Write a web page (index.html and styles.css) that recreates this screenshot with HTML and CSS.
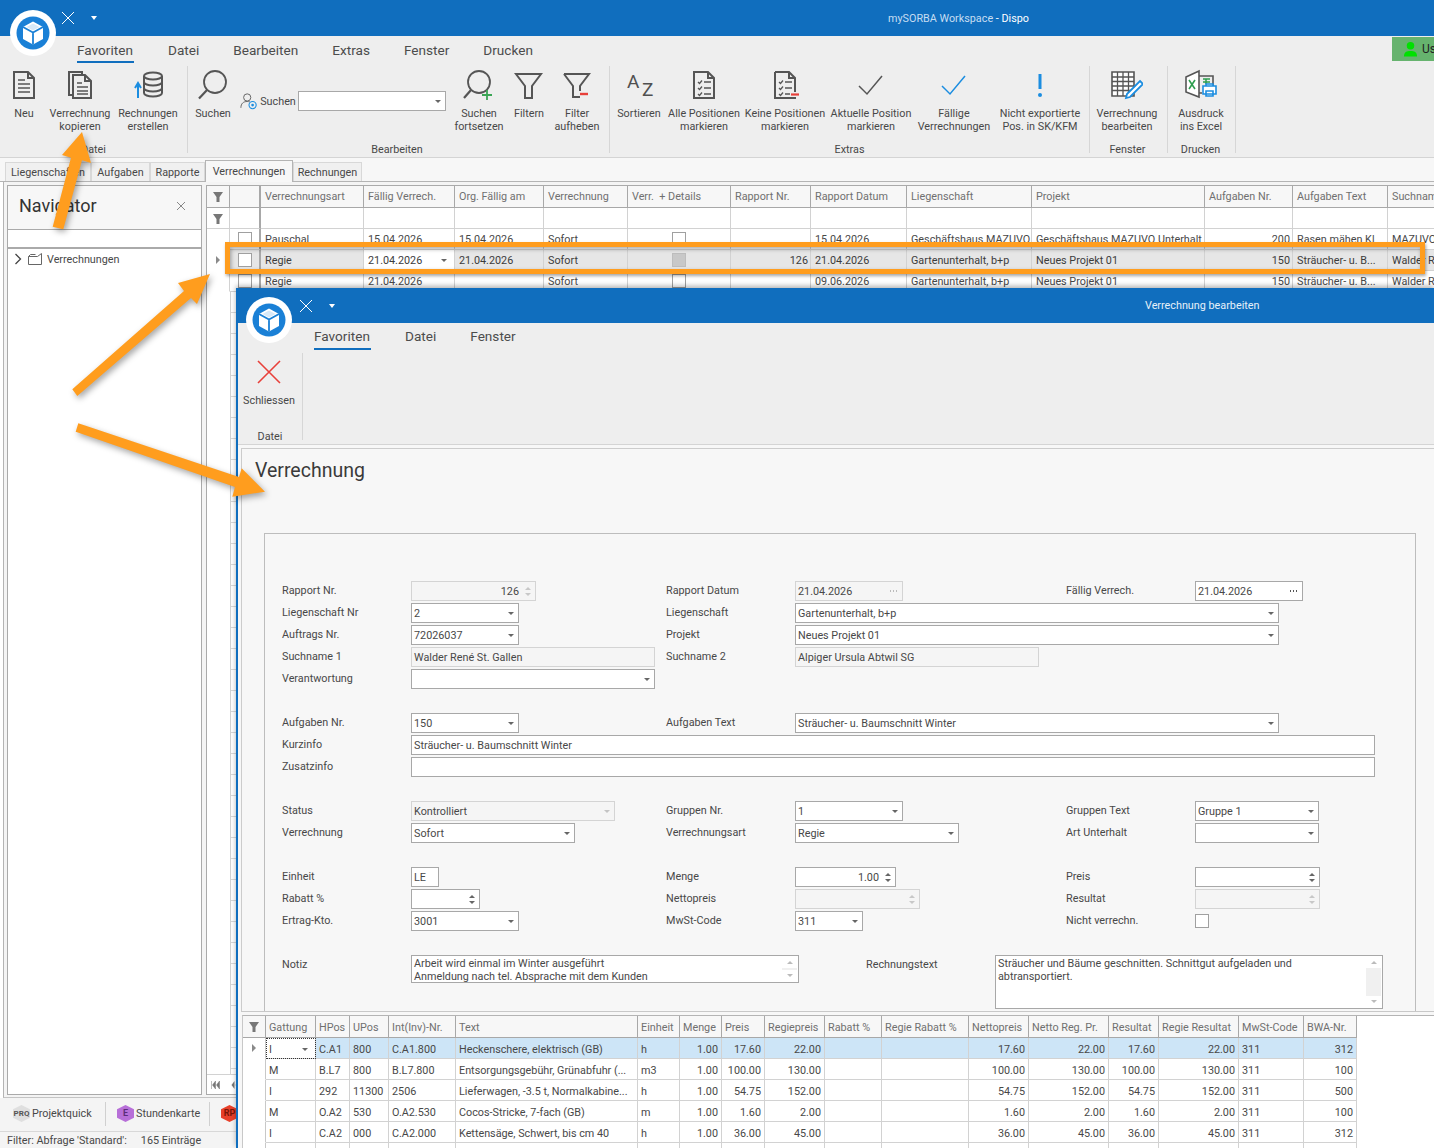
FILE: index.html
```html
<!DOCTYPE html>
<html lang="de">
<head>
  <meta charset="UTF-8" />
  <title>mySORBA Workspace - Dispo</title>
  <link rel="stylesheet" href="styles.css">
</head>
<body>
  <svg class="defs" width="0" height="0">
    <defs>
      <symbol id="i-logo" viewBox="0 0 46 46">
        <circle cx="23" cy="23" r="23" fill="#fff"/>
        <circle cx="23" cy="23" r="16.5" fill="#1a80d6"/>
        <path d="M23 11.5l10 5.5v12l-10 5.5-10-5.5V17z" fill="#fff"/>
        <path d="M13 17l10 5.5L33 17M23 22.5v12" fill="none" stroke="#1a80d6" stroke-width="1.8"/>
        <path d="M23 13.5l6.5 3.5-6.500 3.500-6.500-3.500z" fill="#d7e9f8"/>
      </symbol>
      <symbol id="i-page" viewBox="0 0 32 32">
        <path d="M6 3h14l6 6v20H6zM20 3v6h6" fill="none" stroke="#555" stroke-width="2"/>
        <path d="M10 11h7M10 15h12M10 19h12M10 23h12" stroke="#555" stroke-width="1.5"/>
      </symbol>
      <symbol id="i-copy" viewBox="0 0 32 32">
        <path d="M8 26H5V3h13v3" fill="none" stroke="#555" stroke-width="2"/>
        <path d="M9 6h12l6 6v17H9zM21 6v6h6" fill="none" stroke="#555" stroke-width="2"/>
        <path d="M13 14h5M13 18h11M13 22h11M13 25h11" stroke="#555" stroke-width="1.4"/>
      </symbol>
      <symbol id="i-db" viewBox="0 0 32 32">
        <path d="M6 29V15M3 19l3-5 3 5" fill="none" stroke="#1b8de0" stroke-width="2"/>
        <ellipse cx="21" cy="7" rx="9" ry="3.500" fill="none" stroke="#555" stroke-width="2"/>
        <path d="M12 7v17c0 2 4 3.500 9 3.500s9-1.500 9-3.500V7M12 13c0 2 4 3.500 9 3.500s9-1.500 9-3.500M12 19c0 2 4 3.500 9 3.500s9-1.500 9-3.500" fill="none" stroke="#555" stroke-width="2"/>
      </symbol>
      <symbol id="i-search" viewBox="0 0 32 32">
        <circle cx="18" cy="13" r="11" fill="none" stroke="#555" stroke-width="1.800"/>
        <path d="M10 21L2 29.500" stroke="#555" stroke-width="2.200"/>
      </symbol>
      <symbol id="i-search-plus" viewBox="0 0 32 32">
        <circle cx="16" cy="13" r="11" fill="none" stroke="#555" stroke-width="1.800"/>
        <path d="M8 21L1 29" stroke="#555" stroke-width="2.200"/>
        <path d="M24 21v10M19 26h10" stroke="#3aa655" stroke-width="1.800"/>
      </symbol>
      <symbol id="i-filter" viewBox="0 0 32 32">
        <path d="M3 5h25L19 17v12h-7V17z" fill="none" stroke="#555" stroke-width="2"/>
      </symbol>
      <symbol id="i-filter-minus" viewBox="0 0 32 32">
        <path d="M3 5h25L19 17v5M19 28h-7V17L3 5" fill="none" stroke="#555" stroke-width="2"/>
        <path d="M19 25h8" stroke="#e8403a" stroke-width="2.400"/>
      </symbol>
      <symbol id="i-list" viewBox="0 0 32 32">
        <path d="M6 3h14l6 6v20H6zM20 3v6h6" fill="none" stroke="#555" stroke-width="2"/>
        <path d="M10 13l1.500 1.500 2.500-3M10 19l1.500 1.500 2.500-3M10 25l1.500 1.500 2.500-3" fill="none" stroke="#555" stroke-width="1.300"/>
        <path d="M16 13h7M16 19h7M16 25h7" stroke="#555" stroke-width="1.500"/>
      </symbol>
      <symbol id="i-list-minus" viewBox="0 0 32 32">
        <path d="M6 3h14l6 6v14M26 28v1H6V3M20 3v6h6" fill="none" stroke="#555" stroke-width="2"/>
        <path d="M10 13l1.500 1.500 2.500-3M10 19l1.500 1.500 2.500-3M10 25l1.500 1.500 2.500-3" fill="none" stroke="#555" stroke-width="1.300"/>
        <path d="M16 13h7M16 19h7M16 25h5" stroke="#555" stroke-width="1.500"/>
        <path d="M22 25.500h8" stroke="#e8403a" stroke-width="2.200"/>
      </symbol>
      <symbol id="i-grid" viewBox="0 0 32 32">
        <path d="M1 3h22v24H1z" fill="#fff" stroke="#555" stroke-width="1.600"/>
        <path d="M1 8h22M1 12.500h22M1 17h22M1 21.500h22M6.500 3v24M12 3v24M17.500 3v24" stroke="#555" stroke-width="1.300"/>
        <path d="M29 12l3 3-13 13-4 1 1-4z" fill="#fff" stroke="#1b8de0" stroke-width="1.800"/>
      </symbol>
      <symbol id="i-excel" viewBox="0 0 32 32">
        <path d="M1 8l13-6v26L1 23z" fill="#fff" stroke="#555" stroke-width="1.600"/>
        <path d="M14 7h14v10M14 24h3" fill="none" stroke="#555" stroke-width="1.600"/>
        <path d="M4 11l6 9M10 11l-6 9" stroke="#2e9e4f" stroke-width="1.600"/>
        <path d="M18 10h7M21 10v5M18 13h7" fill="none" stroke="#2e9e4f" stroke-width="1.500"/>
        <path d="M21 17v-2h7v2M18 17h13v8H18zM21 22h7v5h-7z" fill="#fff" stroke="#1b8de0" stroke-width="1.600"/>
      </symbol>
    </defs>
  </svg>

  <div class="app">
    <div class="titlebar">
      <svg class="tb-x" viewBox="0 0 14 14"><path d="M1 1l12 12M13 1L1 13" stroke="#fff" stroke-width="1"/></svg>
      <span class="tb-caret"></span>
      <div class="win-title">mySORBA Workspace <b>- Dispo</b></div>
    </div>
    <svg class="logo main-logo"><use href="#i-logo"/></svg>

    <div class="ribbon">
      <div class="tabs main-tabs">
        <span class="tab on">Favoriten</span>
        <span class="tab">Datei</span>
        <span class="tab">Bearbeiten</span>
        <span class="tab">Extras</span>
        <span class="tab">Fenster</span>
        <span class="tab">Drucken</span>
        <div class="user">
          <svg viewBox="0 0 16 16"><circle cx="8" cy="4.500" r="4" fill="#00e000"/><path d="M1 16c0-5 3-6 7-6s7 1 7 6z" fill="#00e000"/></svg>
          <span>Us</span>
        </div>
      </div>
      <div class="groups">
        <div class="group g1">
          <div class="items">
            <div class="item w48"><svg><use href="#i-page"/></svg><span>Neu</span></div>
            <div class="item w64"><svg><use href="#i-copy"/></svg><span>Verrechnung<br>kopieren</span></div>
            <div class="item w72"><svg><use href="#i-db"/></svg><span>Rechnungen<br>erstellen</span></div>
          </div>
          <div class="group-name">Datei</div>
        </div>
        <div class="group g2">
          <div class="items">
            <div class="item w42"><svg><use href="#i-search"/></svg><span>Suchen</span></div>
            <div class="search-box">
              <svg viewBox="0 0 20 20"><circle cx="8" cy="5.500" r="4" fill="none" stroke="#666" stroke-width="1.100"/><path d="M1 17c0-5 3-7 7-7 1 0 2 .2 3 .5" fill="none" stroke="#666" stroke-width="1.100"/><circle cx="14" cy="14" r="4" fill="none" stroke="#1b8de0" stroke-width="1.200"/><circle cx="14" cy="14" r="1.500" fill="#1b8de0"/></svg>
              <span>Suchen</span>
              <div class="field combo w148"><span></span><i class="caret"></i></div>
            </div>
            <div class="item w54"><svg><use href="#i-search-plus"/></svg><span>Suchen<br>fortsetzen</span></div>
            <div class="item w46"><svg><use href="#i-filter"/></svg><span>Filtern</span></div>
            <div class="item w50"><svg><use href="#i-filter-minus"/></svg><span>Filter<br>aufheben</span></div>
          </div>
          <div class="group-name">Bearbeiten</div>
        </div>
        <div class="group g3">
          <div class="items">
            <div class="item w50">
              <svg viewBox="0 0 32 32"><text x="4" y="19" class="az">A</text><text x="19" y="27" class="az">Z</text></svg>
              <span>Sortieren</span>
            </div>
            <div class="item w80"><svg><use href="#i-list"/></svg><span>Alle Positionen<br>markieren</span></div>
            <div class="item w82"><svg><use href="#i-list-minus"/></svg><span>Keine Positionen<br>markieren</span></div>
            <div class="item w90"><svg viewBox="0 0 32 32"><path d="M4 17l8 8L27 7" fill="none" stroke="#555" stroke-width="1.500"/></svg><span>Aktuelle Position<br>markieren</span></div>
            <div class="item w76"><svg viewBox="0 0 32 32"><path d="M4 17l8 8L27 7" fill="none" stroke="#1b8de0" stroke-width="1.500"/></svg><span>Fällige<br>Verrechnungen</span></div>
            <div class="item w96"><svg viewBox="0 0 32 32"><path d="M16 5v15" stroke="#1b8de0" stroke-width="3"/><circle cx="16" cy="26" r="2" fill="#1b8de0"/></svg><span>Nicht exportierte<br>Pos. in SK/KFM</span></div>
          </div>
          <div class="group-name">Extras</div>
        </div>
        <div class="group g4">
          <div class="items">
            <div class="item w74"><svg><use href="#i-grid"/></svg><span>Verrechnung<br>bearbeiten</span></div>
          </div>
          <div class="group-name">Fenster</div>
        </div>
        <div class="group g5">
          <div class="items">
            <div class="item w66"><svg><use href="#i-excel"/></svg><span>Ausdruck<br>ins Excel</span></div>
          </div>
          <div class="group-name">Drucken</div>
        </div>
      </div>
    </div>

    <div class="doc-tabs">
      <span class="doc-tab t85">Liegenschaften</span>
      <span class="doc-tab t59">Aufgaben</span>
      <span class="doc-tab t55">Rapporte</span>
      <span class="doc-tab t88 active">Verrechnungen</span>
      <span class="doc-tab t69">Rechnungen</span>
    </div>

    <div class="workspace">
      <div class="navigator">
        <div class="nav-head">
          <span>Navigator</span>
          <svg viewBox="0 0 10 10"><path d="M1 1l8 8M9 1L1 9" stroke="#888" stroke-width="1"/></svg>
        </div>
        <div class="nav-search"></div>
        <div class="nav-tree">
          <svg class="chev" viewBox="0 0 8 12"><path d="M1.500 1l5 5-5 5" fill="none" stroke="#444" stroke-width="1.300"/></svg>
          <svg class="folder" viewBox="0 0 14 12"><path d="M.5 3.500h9l4-3v11H.5zM.5 3.500l2-2h5" fill="none" stroke="#666" stroke-width="1"/></svg>
          <span>Verrechnungen</span>
        </div>
      </div>

      <div class="grid-panel">
        <table class="data top-grid">
          <colgroup>
            <col class="ct-0"><col class="ct-1"><col class="ct-2"><col class="ct-3"><col class="ct-4"><col class="ct-5"><col class="ct-6"><col class="ct-7"><col class="ct-8"><col class="ct-9"><col class="ct-10"><col class="ct-11"><col class="ct-12"><col class="ct-13">
          </colgroup>
          <tr class="head">
            <th class="fcell"><svg class="funnel" viewBox="0 0 10 10"><path d="M0 0h10L6.500 5v5h-3V5z" fill="#777"/></svg></th>
            <th class="thick"></th>
            <th>Verrechnungsart</th><th>Fällig Verrech.</th><th>Org. Fällig am</th><th>Verrechnung</th><th>Verr. &nbsp;+ Details</th><th>Rapport Nr.</th><th>Rapport Datum</th><th>Liegenschaft</th><th>Projekt</th><th>Aufgaben Nr.</th><th>Aufgaben Text</th><th>Suchname</th>
          </tr>
          <tr class="filter-row">
            <td class="fcell"><svg class="funnel" viewBox="0 0 10 10"><path d="M0 0h10L6.500 5v5h-3V5z" fill="#777"/></svg></td>
            <td class="thick"></td><td></td><td></td><td></td><td></td><td></td><td></td><td></td><td></td><td></td><td></td><td></td><td></td>
          </tr>
          <tr>
            <td class="indicator"></td><td class="thick chk"><i class="box"></i></td>
            <td>Pauschal</td><td>15.04.2026</td><td>15.04.2026</td><td>Sofort</td><td class="chk"><i class="box"></i></td><td></td><td>15.04.2026</td><td>Geschäftshaus MAZUVO</td><td>Geschäftshaus MAZUVO Unterhalt</td><td class="num">200</td><td>Rasen mähen Kl</td><td>MAZUVO</td>
          </tr>
          <tr class="current">
            <td class="indicator"><i class="pointer"></i></td><td class="thick chk"><i class="box"></i></td>
            <td>Regie</td><td class="focus"><div class="cell-flex">21.04.2026<i class="caret"></i></div></td><td>21.04.2026</td><td>Sofort</td><td class="chk"><i class="box grey"></i></td><td class="num">126</td><td>21.04.2026</td><td>Gartenunterhalt, b+p</td><td>Neues Projekt 01</td><td class="num">150</td><td>Sträucher- u. B...</td><td>Walder René</td>
          </tr>
          <tr>
            <td class="indicator"></td><td class="thick chk"><i class="box"></i></td>
            <td>Regie</td><td>21.04.2026</td><td></td><td>Sofort</td><td class="chk"><i class="box"></i></td><td></td><td>09.06.2026</td><td>Gartenunterhalt, b+p</td><td>Neues Projekt 01</td><td class="num">150</td><td>Sträucher- u. B...</td><td>Walder René</td>
          </tr>
        </table>
        <div class="grid-fill"></div>
        <div class="pager">
          <svg viewBox="0 0 10 8"><path d="M1 0v8M5 0L2 4l3 4zM9 0L6 4l3 4z" fill="#777" stroke="#777" stroke-width=".5"/></svg>
          <svg viewBox="0 0 10 8"><path d="M5 0L2 4l3 4zM9 0L6 4l3 4z" fill="#777"/></svg>
        </div>
      </div>
    </div>

    <div class="quickbar">
      <div class="quick q-prq"><i class="hex grey-hex">PRQ</i><span>Projektquick</span></div>
      <div class="quick q-std"><i class="hex purple-hex">E</i><span>Stundenkarte</span></div>
      <div class="quick"><i class="hex red-hex">RP</i></div>
    </div>
    <div class="statusbar">
      <span class="st-filter">Filter: Abfrage 'Standard':</span>
      <span>165 Einträge</span>
    </div>

    <!-- Dialog window -->
    <div class="dialog">
      <div class="titlebar dlg-title">
        <svg class="tb-x" viewBox="0 0 14 14"><path d="M1 1l12 12M13 1L1 13" stroke="#fff" stroke-width="1"/></svg>
        <span class="tb-caret"></span>
        <div class="dlg-name">Verrechnung bearbeiten</div>
      </div>
      <svg class="logo dlg-logo"><use href="#i-logo"/></svg>
      <div class="ribbon dlg-ribbon">
        <div class="tabs dlg-tabs">
          <span class="tab on">Favoriten</span>
          <span class="tab">Datei</span>
          <span class="tab">Fenster</span>
        </div>
        <div class="groups dlg-groups">
          <div class="group dg1">
            <div class="items">
              <div class="item w62">
                <svg viewBox="0 0 32 32"><path d="M5 5l22 22M27 5L5 27" stroke="#e8403a" stroke-width="1.600"/></svg>
                <span>Schliessen</span>
              </div>
            </div>
            <div class="group-name">Datei</div>
          </div>
        </div>
      </div>

      <div class="dlg-body">
        <h1 class="form-title">Verrechnung</h1>
        <div class="form-panel">
          <div class="form-block">
            <label class="c1">Rapport Nr.</label>
            <div class="field ro w125 right"><span>126</span><i class="spin off"></i></div>
            <label class="c3">Rapport Datum</label>
            <div class="field ro w108"><span>21.04.2026</span><i class="dots off"></i></div>
            <label class="c5">Fällig Verrech.</label>
            <div class="field w108"><span>21.04.2026</span><i class="dots"></i></div>

            <label class="c1">Liegenschaft Nr</label>
            <div class="field w108"><span>2</span><i class="caret"></i></div>
            <label class="c3">Liegenschaft</label>
            <div class="field w484 span3"><span>Gartenunterhalt, b+p</span><i class="caret"></i></div>

            <label class="c1">Auftrags Nr.</label>
            <div class="field w108"><span>72026037</span><i class="caret"></i></div>
            <label class="c3">Projekt</label>
            <div class="field w484 span3"><span>Neues Projekt 01</span><i class="caret"></i></div>

            <label class="c1">Suchname 1</label>
            <div class="field ro w244"><span>Walder René St. Gallen</span></div>
            <label class="c3">Suchname 2</label>
            <div class="field ro w244"><span>Alpiger Ursula Abtwil SG</span></div>

            <label class="c1">Verantwortung</label>
            <div class="field w244"><span></span><i class="caret"></i></div>
          </div>

          <div class="form-block">
            <label class="c1">Aufgaben Nr.</label>
            <div class="field w108"><span>150</span><i class="caret"></i></div>
            <label class="c3">Aufgaben Text</label>
            <div class="field w484 span3"><span>Sträucher- u. Baumschnitt Winter</span><i class="caret"></i></div>

            <label class="c1">Kurzinfo</label>
            <div class="field w964 span5"><span>Sträucher- u. Baumschnitt Winter</span></div>

            <label class="c1">Zusatzinfo</label>
            <div class="field w964 span5"><span></span></div>
          </div>

          <div class="form-block">
            <label class="c1">Status</label>
            <div class="field ro w204"><span>Kontrolliert</span><i class="caret off"></i></div>
            <label class="c3">Gruppen Nr.</label>
            <div class="field w108"><span>1</span><i class="caret"></i></div>
            <label class="c5">Gruppen Text</label>
            <div class="field w124"><span>Gruppe 1</span><i class="caret"></i></div>

            <label class="c1">Verrechnung</label>
            <div class="field w164"><span>Sofort</span><i class="caret"></i></div>
            <label class="c3">Verrechnungsart</label>
            <div class="field w164"><span>Regie</span><i class="caret"></i></div>
            <label class="c5">Art Unterhalt</label>
            <div class="field w124"><span></span><i class="caret"></i></div>
          </div>

          <div class="form-block">
            <label class="c1">Einheit</label>
            <div class="field w28"><span>LE</span></div>
            <label class="c3">Menge</label>
            <div class="field w101 right"><span>1.00</span><i class="spin"></i></div>
            <label class="c5">Preis</label>
            <div class="field w125 right"><span></span><i class="spin"></i></div>

            <label class="c1">Rabatt %</label>
            <div class="field w69 right"><span></span><i class="spin"></i></div>
            <label class="c3">Nettopreis</label>
            <div class="field ro w125 right"><span></span><i class="spin off"></i></div>
            <label class="c5">Resultat</label>
            <div class="field ro w125 right"><span></span><i class="spin off"></i></div>

            <label class="c1">Ertrag-Kto.</label>
            <div class="field w108"><span>3001</span><i class="caret"></i></div>
            <label class="c3">MwSt-Code</label>
            <div class="field w68"><span>311</span><i class="caret"></i></div>
            <label class="c5">Nicht verrechn.</label>
            <i class="box form-check"></i>
          </div>

          <div class="notes">
            <label>Notiz</label>
            <div class="memo memo-short">
              <div class="memo-text">Arbeit wird einmal im Winter ausgeführt<br>Anmeldung nach tel. Absprache mit dem Kunden</div>
              <div class="memo-bar"><i class="sb-up"></i><i class="sb-down"></i></div>
            </div>
            <label class="notes-gap">Rechnungstext</label>
            <div class="memo memo-tall">
              <div class="memo-text">Sträucher und Bäume geschnitten. Schnittgut aufgeladen und abtransportiert.</div>
              <div class="memo-bar"><i class="sb-up"></i><i class="sb-down"></i></div>
            </div>
          </div>
        </div>
      </div>

      <div class="lower">
        <table class="data low-grid">
          <colgroup>
            <col class="cl-0"><col class="cl-1"><col class="cl-2"><col class="cl-3"><col class="cl-4"><col class="cl-5"><col class="cl-6"><col class="cl-7"><col class="cl-8"><col class="cl-9"><col class="cl-10"><col class="cl-11"><col class="cl-12"><col class="cl-13"><col class="cl-14"><col class="cl-15"><col class="cl-16"><col class="cl-17">
          </colgroup>
          <tr class="head">
            <th class="fcell"><svg class="funnel" viewBox="0 0 10 10"><path d="M0 0h10L6.500 5v5h-3V5z" fill="#777"/></svg></th>
            <th>Gattung</th><th>HPos</th><th>UPos</th><th>Int(Inv)-Nr.</th><th>Text</th><th>Einheit</th><th>Menge</th><th>Preis</th><th>Regiepreis</th><th>Rabatt %</th><th>Regie Rabatt %</th><th>Nettopreis</th><th>Netto Reg. Pr.</th><th>Resultat</th><th>Regie Resultat</th><th>MwSt-Code</th><th>BWA-Nr.</th>
          </tr>
          <tr class="picked">
            <td class="indicator"><i class="pointer"></i></td>
            <td class="dotted"><div class="cell-flex">I<i class="caret"></i></div></td>
            <td>C.A1</td><td>800</td><td>C.A1.800</td><td>Heckenschere, elektrisch (GB)</td><td>h</td><td class="num">1.00</td><td class="num">17.60</td><td class="num">22.00</td><td></td><td></td><td class="num">17.60</td><td class="num">22.00</td><td class="num">17.60</td><td class="num">22.00</td><td>311</td><td class="num">312</td>
          </tr>
          <tr>
            <td class="indicator"></td><td>M</td><td>B.L7</td><td>800</td><td>B.L7.800</td><td>Entsorgungsgebühr, Grünabfuhr (...</td><td>m3</td><td class="num">1.00</td><td class="num">100.00</td><td class="num">130.00</td><td></td><td></td><td class="num">100.00</td><td class="num">130.00</td><td class="num">100.00</td><td class="num">130.00</td><td>311</td><td class="num">100</td>
          </tr>
          <tr>
            <td class="indicator"></td><td>I</td><td>292</td><td>11300</td><td>2506</td><td>Lieferwagen, -3.5 t, Normalkabine...</td><td>h</td><td class="num">1.00</td><td class="num">54.75</td><td class="num">152.00</td><td></td><td></td><td class="num">54.75</td><td class="num">152.00</td><td class="num">54.75</td><td class="num">152.00</td><td>311</td><td class="num">500</td>
          </tr>
          <tr>
            <td class="indicator"></td><td>M</td><td>O.A2</td><td>530</td><td>O.A2.530</td><td>Cocos-Stricke, 7-fach (GB)</td><td>m</td><td class="num">1.00</td><td class="num">1.60</td><td class="num">2.00</td><td></td><td></td><td class="num">1.60</td><td class="num">2.00</td><td class="num">1.60</td><td class="num">2.00</td><td>311</td><td class="num">100</td>
          </tr>
          <tr>
            <td class="indicator"></td><td>I</td><td>C.A2</td><td>000</td><td>C.A2.000</td><td>Kettensäge, Schwert, bis cm 40</td><td>h</td><td class="num">1.00</td><td class="num">36.00</td><td class="num">45.00</td><td></td><td></td><td class="num">36.00</td><td class="num">45.00</td><td class="num">36.00</td><td class="num">45.00</td><td>311</td><td class="num">312</td>
          </tr>
          <tr>
            <td class="indicator"></td><td></td><td></td><td></td><td></td><td></td><td></td><td></td><td></td><td></td><td></td><td></td><td></td><td></td><td></td><td></td><td></td><td></td>
          </tr>
        </table>
      </div>
    </div>

    <!-- Annotations drawn over the screenshot -->
    <div class="highlight"></div>
    <svg class="arrows" viewBox="0 0 1434 1148">
      <polygon points="52.700,226.700 71,157.700 62,155 82,132 91,163 82,160.300 63.300,229.300"/>
      <polygon points="72.300,389.300 184,291 178,283 210,274 197,304 191,298 77.300,396"/>
      <polygon points="78.300,423.300 239,477 241.700,468.300 265,491.700 232.300,496.700 235,487 75.700,431.700"/>
    </svg>
  </div>
</body>
</html>
```

FILE: styles.css
```css
* { box-sizing: border-box; }
html, body {
  margin: 0;
  height: 100%;
  overflow: hidden;
}
body {
  font-family: Roboto, "Noto Sans", sans-serif;
  font-size: 10.8px;
  color: #484848;
  background: #fff;
}
.defs { position: absolute; }
.app {
  position: relative;
  width: 1434px;
  height: 1148px;
  display: flex;
  flex-direction: column;
  overflow: hidden;
}

/* title bars */
.titlebar {
  display: flex;
  align-items: center;
  flex: none;
  height: 36px;
  padding-left: 61px;
  background: #106ebe;
  color: #fff;
}
.tb-x { width: 14px; height: 14px; }
.tb-caret {
  margin-left: 16px;
  border: 3px solid transparent;
  border-top: 4px solid #fff;
  border-bottom: 0;
}
.win-title {
  margin-left: 791px;
  color: #c6ddf2;
}
.win-title b { font-weight: 400; color: #fff; }
.logo {
  position: absolute;
  width: 46px;
  height: 46px;
}
.main-logo { left: 10px; top: 10px; }

/* ribbon */
.ribbon {
  flex: none;
  height: 122px;
  background: #eeeeee;
  border-bottom: 1px solid #d4d4d4;
}
.tabs {
  display: flex;
  height: 30px;
  padding-left: 77px;
  gap: 34px;
}
.tab {
  height: 26px;
  line-height: 28px;
  font-size: 13.6px;
  color: #4c4c4c;
}
.tab.on { min-width: 57px; border-bottom: 2px solid #106ebe; height: 27px; }
.dlg-tabs .tab { line-height: 27px; }
.user {
  display: flex;
  align-items: center;
  gap: 4px;
  width: 42px;
  height: 24px;
  margin: 1px 0 0 auto;
  padding-left: 11px;
  background: #66b36e;
  color: #222;
  font-size: 12px;
  overflow: hidden;
}
.user svg { flex: none; width: 15px; height: 16px; }
.groups { display: flex; height: 91px; }
.group {
  display: flex;
  flex-direction: column;
  justify-content: space-between;
  height: 87px;
  border-right: 1px solid #d6d6d6;
}
.g1 { width: 188px; }
.g2 { width: 422px; padding-left: 4px; }
.g3 { width: 480px; padding-left: 4px; }
.g4 { width: 78px; padding-right: 2px; }
.g5 { width: 68px; padding-right: 2px; }
.g2 .group-name { padding-right: 7px; }
.g3 .group-name { padding-right: 4px; }
.items { display: flex; }
.group-name {
  line-height: 13px;
  margin-bottom: -3px;
  text-align: center;
}
.item {
  display: flex;
  flex-direction: column;
  align-items: center;
  flex: none;
  padding-top: 3px;
  line-height: 13px;
  text-align: center;
  white-space: nowrap;
}
.item svg {
  flex: none;
  width: 32px;
  height: 32px;
  margin-bottom: 6px;
}
.w42 { width: 42px; }
.w46 { width: 46px; }
.w48 { width: 48px; }
.w50 { width: 50px; }
.w54 { width: 54px; }
.w62 { width: 62px; }
.w64 { width: 64px; }
.w66 { width: 66px; }
.w72 { width: 72px; }
.w74 { width: 74px; }
.w76 { width: 76px; }
.w80 { width: 80px; }
.w82 { width: 82px; }
.w90 { width: 90px; }
.w96 { width: 96px; }
.az { font-size: 19px; font-weight: 400; fill: #505050; font-family: Roboto, sans-serif; }
.search-box {
  display: flex;
  align-items: center;
  justify-content: space-between;
  flex: none;
  width: 208px;
  height: 20px;
  margin: 25px 6px 0 4px;
  padding-left: 2px;
}
.search-box svg { flex: none; width: 18px; height: 19px; }
.w148 { width: 148px; }

/* doc tabs */
.doc-tabs {
  display: flex;
  flex: none;
  align-items: flex-end;
  height: 24px;
  padding-left: 5px;
  background: #f7f7f7;
  border-bottom: 1px solid #b4b4b4;
}
.doc-tab {
  height: 19px;
  line-height: 19px;
  text-align: center;
  background: #f0f0f0;
  border: 1px solid #d8d8d8;
  border-bottom: 0;
  white-space: nowrap;
  overflow: hidden;
}
.doc-tab.active {
  height: 22px;
  line-height: 21px;
  margin-bottom: -1px;
  background: #f7f7f7;
  border-color: #b4b4b4;
}
.t85 { width: 86px; }
.t59 { width: 59px; }
.t55 { width: 55px; }
.t88 { width: 88px; }
.t69 { width: 69px; }

/* main workspace */
.workspace {
  display: flex;
  flex: none;
  gap: 4px;
  height: 916px;
  margin-left: 3px;
  padding: 3px 0 2px 3px;
  background: #f4f4f4;
  border-left: 1px solid #b4b4b4;
  border-bottom: 1px solid #c4c4c4;
}
.navigator {
  display: flex;
  flex-direction: column;
  flex: none;
  width: 195px;
  background: #fff;
  border: 1px solid #aaa;
}
.nav-head {
  display: flex;
  align-items: center;
  justify-content: space-between;
  flex: none;
  height: 43px;
  padding: 0 15px 5px 11px;
  background: #f7f7f7;
  font-size: 18px;
  color: #333;
}
.nav-head svg { width: 10px; height: 10px; margin-top: 2px; }
.nav-search {
  flex: none;
  height: 20px;
  border-top: 1px solid #aaa;
  border-bottom: 2px solid #aaa;
}
.nav-tree {
  display: flex;
  align-items: center;
  height: 22px;
  padding-left: 6px;
  margin-top: -1px;
}
.chev { width: 8px; height: 12px; margin-right: 6px; }
.folder { width: 14px; height: 12px; margin-right: 5px; }

.grid-panel {
  display: flex;
  flex-direction: column;
  flex: 1;
  min-width: 0;
  background: #fff;
  border: 1px solid #aaa;
  border-right: 0;
  overflow: hidden;
}
.data {
  flex: none;
  table-layout: fixed;
  border-collapse: separate;
  border-spacing: 0;
  color: #484848;
}
.top-grid { width: 1259px; }
.ct-0 { width: 23px; }
.ct-1 { width: 31px; }
.ct-2 { width: 103px; }
.ct-3 { width: 91px; }
.ct-4 { width: 89px; }
.ct-5 { width: 84px; }
.ct-6 { width: 103px; }
.ct-7 { width: 80px; }
.ct-8 { width: 96px; }
.ct-9 { width: 125px; }
.ct-10 { width: 173px; }
.ct-11 { width: 88px; }
.ct-12 { width: 95px; }
.ct-13 { width: 78px; }
.data th, .data td {
  height: 21px;
  padding: 0 3px 0 4px;
  border-right: 1px solid #d2d2d2;
  border-bottom: 1px solid #d2d2d2;
  white-space: nowrap;
  overflow: hidden;
  text-align: left;
  font-weight: 400;
}
.top-grid .num { padding-right: 2px; }
.low-grid th, .low-grid td { padding-top: 2px; padding-left: 3px; }
.data th {
  height: 22px;
  background: #f7f7f7;
  color: #707070;
  border-right-color: #a8a8a8;
  border-bottom: 1px solid #a8a8a8;
}
.data .num { text-align: right; }
.data .fcell, .data .chk, .data .indicator { text-align: center; padding: 0; }
.data .thick { border-right: 2px solid #a8a8a8; }
.data .indicator { border-bottom-color: transparent; }
.funnel { display: block; width: 10px; height: 10px; margin: 1px auto 0; }
.box {
  display: block;
  width: 14px;
  height: 14px;
  margin: 0 auto;
  background: #fff;
  border: 1px solid #a0a0a0;
}
.box.grey { background: #c8c8c8; border-color: #bdbdbd; }
.pointer {
  display: block;
  width: 0;
  margin: 0 auto;
  border: 4px solid transparent;
  border-left: 4px solid #8a8a8a;
  border-right: 0;
}
.current td {
  background: #e6e6e6;
  color: #3c3c3c;
}
.current .indicator { background: #fff; }
.current .focus { background: #fff; }
.cell-flex {
  display: flex;
  align-items: center;
  justify-content: space-between;
}
.caret {
  display: block;
  flex: none;
  margin-right: 4px;
  border: 3px solid transparent;
  border-top: 3px solid #666;
  border-bottom: 0;
}
.caret.off { border-top-color: #c4c4c4; }
.grid-fill {
  flex: 1;
  margin-left: 23px;
  border-left: 1px solid #d2d2d2;
  background: repeating-linear-gradient(#fff 0, #fff 20px, #d8d8d8 20px, #d8d8d8 21px);
}
.pager {
  display: flex;
  align-items: center;
  flex: none;
  height: 20px;
  gap: 8px;
  padding-left: 3px;
  border-top: 1px solid #d2d2d2;
}
.pager svg { width: 11px; height: 8px; }

/* bottom bars */
.quickbar {
  display: flex;
  align-items: center;
  flex: none;
  height: 33px;
  padding: 0 0 2px 13px;
  background: #f4f4f4;
}
.quick {
  display: flex;
  align-items: center;
  height: 24px;
  gap: 2px;
  white-space: nowrap;
}
.q-prq { width: 93px; border-right: 1px solid #d0d0d0; margin-right: 11px; }
.q-std { width: 93px; border-right: 1px solid #d0d0d0; margin-right: 11px; }
.hex {
  display: block;
  flex: none;
  width: 17px;
  height: 17px;
  line-height: 17px;
  text-align: center;
  font-style: normal;
  font-weight: 700;
  font-size: 9px;
  clip-path: polygon(50% 0, 100% 25%, 100% 75%, 50% 100%, 0 75%, 0 25%);
}
.grey-hex { background: #dfdfdf; color: #555; font-size: 8px; }
.purple-hex { background: #b76fd8; color: #5b2c78; }
.red-hex { background: #e8402a; color: #7a1608; }
.statusbar {
  display: flex;
  flex: 1;
  align-items: center;
  gap: 14px;
  padding: 1px 0 0 7px;
  background: #f4f4f4;
  border-top: 1px solid #d8d8d8;
}

/* dialog window */
.dialog {
  position: absolute;
  left: 236px;
  top: 288px;
  right: 0;
  bottom: 0;
  display: flex;
  flex-direction: column;
  background: #f7f7f7;
  border-left: 2px solid #106ebe;
  box-shadow: 0 -2px 5px rgba(0,0,0,.3);
}
.dlg-title {
  height: 35px;
  padding-left: 61px;
}
.dlg-name { margin-left: 810px; padding-bottom: 1px; color: #e6f0f9; }
.dlg-logo { left: 8px; top: 9px; }
.dlg-ribbon { height: 122px; }
.dlg-tabs { padding-left: 76px; }
.dlg-groups { height: 91px; }
.dg1 { width: 65px; height: 87px; }

.dlg-body {
  flex: none;
  height: 564px;
  margin: 3px 0 0 3px;
  padding: 0 18px 0 22px;
  background: #f7f7f7;
  border-left: 1px solid #ccc;
  border-top: 1px solid #ccc;
  border-bottom: 1px solid #c8c8c8;
}
.form-title {
  margin: 0 0 0 -9px;
  height: 84px;
  padding-top: 8px;
  font-size: 19.5px;
  line-height: 28px;
  font-weight: 400;
  color: #3a3a3a;
}
.form-panel {
  height: 478px;
  padding: 47px 0 0 17px;
  border: 1px solid #bdbdbd;
  border-bottom: 0;
}
.form-block {
  display: grid;
  grid-template-columns: 129px 255px 129px 271px 129px 1fr;
  grid-auto-rows: 22px;
  margin-bottom: 22px;
}
.form-block label { height: 20px; line-height: 19px; white-space: nowrap; }
.c1 { grid-column: 1; }
.c3 { grid-column: 3; }
.c5 { grid-column: 5; }
.span3 { grid-column: 4 / span 3; }
.span5 { grid-column: 2 / span 5; }
.field {
  display: flex;
  align-items: center;
  justify-content: space-between;
  height: 20px;
  padding-left: 2px;
  background: #fff;
  border: 1px solid #a8a8a8;
  white-space: nowrap;
}
.field.ro { background: #f5f5f5; border-color: #d4d4d4; }
.field.right span { flex: 1; padding-right: 6px; text-align: right; }
.w28 { width: 28px; }
.w68 { width: 68px; }
.w69 { width: 69px; }
.w101 { width: 101px; }
.w108 { width: 108px; }
.w124 { width: 124px; }
.w125 { width: 125px; }
.w164 { width: 164px; }
.w204 { width: 204px; }
.w244 { width: 244px; }
.w484 { width: 484px; }
.w964 { width: 964px; }
.spin {
  display: flex;
  flex-direction: column;
  flex: none;
  gap: 3px;
  margin-right: 4px;
  width: 6px;
}
.spin::before, .spin::after {
  content: "";
  border: 3px solid transparent;
}
.spin::before { border-bottom: 3px solid #666; border-top: 0; }
.spin::after { border-top: 3px solid #666; border-bottom: 0; }
.spin.off::before { border-bottom-color: #c8c8c8; }
.spin.off::after { border-top-color: #c8c8c8; }
.dots {
  flex: none;
  margin-right: 4px;
  width: 9px;
  height: 2px;
  background: radial-gradient(circle, #555 0, #555 1px, transparent 1px) 0 0 / 3px 2px;
}
.dots.off { background-image: radial-gradient(circle, #bbb 0, #bbb 1px, transparent 1px); }
.form-check { margin: 3px 0 0; }
.notes {
  display: grid;
  grid-template-columns: 129px 388px 67px 129px 388px;
  align-items: start;
}
.notes label { padding-top: 3px; }
.notes-gap { grid-column: 4; }
.memo {
  display: flex;
  justify-content: space-between;
  background: #fff;
  border: 1px solid #a8a8a8;
  line-height: 13px;
}
.memo-short { height: 28px; grid-column: 2; }
.memo-tall { height: 54px; grid-column: 5; }
.memo-text { padding: 1px 3px 1px 2px; white-space: normal; }
.memo-bar {
  display: flex;
  flex-direction: column;
  justify-content: space-between;
  flex: none;
  width: 15px;
  margin: 1px;
  background: #f0f0f0;
}
.memo-bar i {
  display: block;
  height: 11px;
  background: #fff;
}
.sb-up::before, .sb-down::before {
  content: "";
  display: block;
  width: 0;
  margin: 4px auto 0;
  border: 3px solid transparent;
}
.sb-up::before { border-bottom: 3px solid #bbb; border-top: 0; }
.sb-down::before { border-top: 3px solid #bbb; border-bottom: 0; }

.lower {
  flex: 1;
  margin: 3px 0 0 4px;
  background: #fff;
  border-top: 1px solid #b4b4b4;
  border-left: 1px solid #c8c8c8;
  overflow: hidden;
}
.low-grid { width: 1113px; }
.cl-0 { width: 23px; }
.cl-1 { width: 50px; }
.cl-2 { width: 34px; }
.cl-3 { width: 39px; }
.cl-4 { width: 67px; }
.cl-5 { width: 182px; }
.cl-6 { width: 42px; }
.cl-7 { width: 42px; }
.cl-8 { width: 43px; }
.cl-9 { width: 60px; }
.cl-10 { width: 57px; }
.cl-11 { width: 87px; }
.cl-12 { width: 60px; }
.cl-13 { width: 80px; }
.cl-14 { width: 50px; }
.cl-15 { width: 80px; }
.cl-16 { width: 65px; }
.cl-17 { width: 53px; }
.low-grid .fcell { background: #f7f7f7; }
.picked td { background: #cde5f7; }
.picked .indicator { background: #fff; }
.picked .dotted { background: #fff; outline: 1px dotted #333; outline-offset: -1px; }
.low-grid .indicator { border-right-color: #c8c8c8; }

/* annotation overlay */
.highlight {
  position: absolute;
  left: 225px;
  top: 242px;
  width: 1200px;
  height: 32px;
  border: 5px solid #ff9d1e;
  box-shadow: 1px 2px 3px rgba(0,0,0,.35), inset 1px 2px 4px rgba(0,0,0,.35);
}
.arrows {
  position: absolute;
  left: 0;
  top: 0;
  width: 1434px;
  height: 1148px;
  fill: #ff9d1e;
  filter: drop-shadow(2px 3px 3px rgba(0,0,0,.35));
  pointer-events: none;
}
```
